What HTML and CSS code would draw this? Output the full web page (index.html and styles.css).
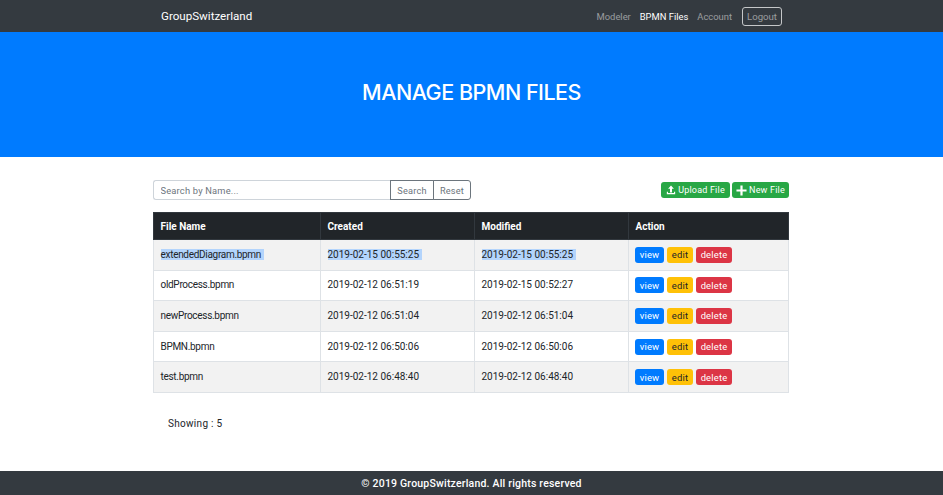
FILE: index.html
```html
<!DOCTYPE html>
<html lang="en">
<head>
  <meta charset="UTF-8" />
  <title>Manage BPMN Files</title>
  <link rel="stylesheet" href="styles.css">
</head>
<body>
  <nav class="navbar">
    <a class="brand" href="#">GroupSwitzerland</a>
    <div class="nav-links">
      <a href="#">Modeler</a>
      <a class="active" href="#">BPMN Files</a>
      <a href="#">Account</a>
      <button class="btn-logout">Logout</button>
    </div>
  </nav>

  <header class="hero">
    <h1>MANAGE BPMN FILES</h1>
  </header>

  <main class="content">
    <div class="toolbar">
      <div class="search">
        <input type="text" placeholder="Search by Name..." />
        <button class="btn-outline">Search</button>
        <button class="btn-outline">Reset</button>
      </div>
      <div class="file-actions">
        <button class="btn btn-green btn-upload">
          <svg viewBox="0 0 12 12" width="10" height="10"><path d="M6 .5 9.5 4.5H7.2V9H4.8V4.5H2.5zM1 8h1.4v1.6h7.2V8H11v3H1z" fill="#fff"/></svg>
          Upload File
        </button>
        <button class="btn btn-green btn-new">
          <svg viewBox="0 0 12 12" width="11" height="11"><path d="M4.8 .5h2.4v4.3h4.3v2.4H7.2v4.3H4.8V7.2H.5V4.8h4.3z" fill="#fff"/></svg>
          New File
        </button>
      </div>
    </div>

    <table class="files">
      <thead>
        <tr><th>File Name</th><th>Created</th><th>Modified</th><th>Action</th></tr>
      </thead>
      <tbody>
        <tr>
          <td class="name"><span class="selected">extendedDiagram.bpmn</span></td>
          <td><span class="selected">2019-02-15 00:55:25</span></td>
          <td><span class="selected">2019-02-15 00:55:25</span></td>
          <td class="actions"><button class="btn btn-blue">view</button><button class="btn btn-yellow">edit</button><button class="btn btn-red">delete</button></td>
        </tr>
        <tr>
          <td class="name">oldProcess.bpmn</td>
          <td>2019-02-12 06:51:19</td>
          <td>2019-02-15 00:52:27</td>
          <td class="actions"><button class="btn btn-blue">view</button><button class="btn btn-yellow">edit</button><button class="btn btn-red">delete</button></td>
        </tr>
        <tr>
          <td class="name">newProcess.bpmn</td>
          <td>2019-02-12 06:51:04</td>
          <td>2019-02-12 06:51:04</td>
          <td class="actions"><button class="btn btn-blue">view</button><button class="btn btn-yellow">edit</button><button class="btn btn-red">delete</button></td>
        </tr>
        <tr>
          <td class="name">BPMN.bpmn</td>
          <td>2019-02-12 06:50:06</td>
          <td>2019-02-12 06:50:06</td>
          <td class="actions"><button class="btn btn-blue">view</button><button class="btn btn-yellow">edit</button><button class="btn btn-red">delete</button></td>
        </tr>
        <tr>
          <td class="name">test.bpmn</td>
          <td>2019-02-12 06:48:40</td>
          <td>2019-02-12 06:48:40</td>
          <td class="actions"><button class="btn btn-blue">view</button><button class="btn btn-yellow">edit</button><button class="btn btn-red">delete</button></td>
        </tr>
      </tbody>
    </table>

    <p class="count">Showing : 5</p>
  </main>

  <footer class="footer">© 2019 GroupSwitzerland. All rights reserved</footer>
</body>
</html>
```

FILE: styles.css
```css
* { box-sizing: border-box; }
body { margin: 0; height: 495px; overflow: hidden; display: flex; flex-direction: column; font-family: Roboto, "Liberation Sans", sans-serif; font-size: 10px; color: #212529; background: #fff; }
button { font-family: inherit; cursor: pointer; }

.navbar { height: 32px; flex: none; background: #343a40; display: flex; align-items: center; justify-content: space-between; padding: 0 161px; }
.brand { color: #fff; font-size: 11.6px; text-decoration: none; }
.nav-links { display: flex; align-items: center; gap: 9px; }
.nav-links a { color: rgba(255,255,255,.5); text-decoration: none; font-size: 9.4px; }
.nav-links a.active { color: #fff; }
.btn-logout { margin-left: 1px; width: 40px; height: 19px; padding: 0; background: transparent; color: rgba(255,255,255,.5); border: 1px solid #c5c7c9; border-radius: 3px; font-size: 9.6px; }

.hero { height: 125px; flex: none; background: #007bff; display: flex; align-items: center; justify-content: center; padding-bottom: 6px; }
.hero h1 { margin: 0; font-family: Inter, sans-serif; color: #fff; font-size: 21.5px; font-weight: 500; letter-spacing: -0.5px; }

.content { flex: 1; width: 636px; margin-left: 153px; padding-top: 23px; }
.toolbar { display: flex; justify-content: space-between; align-items: center; height: 20px; }
.search { display: flex; height: 20px; }
.search input { width: 237px; height: 20px; padding: 0 6.5px; border: 1px solid #ced4da; border-right: 0; border-radius: 3px 0 0 3px; font-family: inherit; font-size: 9.3px; letter-spacing: .2px; outline: none; }
.search input::placeholder { color: #6c757d; }
.btn-outline { height: 20px; width: 44px; padding: 0; background: #fff; color: #6c757d; border: 1px solid #6c757d; font-size: 9.2px; letter-spacing: .2px; }
.btn-outline + .btn-outline { width: 38px; margin-left: -1px; border-radius: 0 3px 3px 0; }

.file-actions { display: flex; gap: 2px; }
.btn { height: 16px; padding: 0; border: 0; border-radius: 3px; color: #fff; font-size: 9.4px; letter-spacing: .2px; white-space: nowrap; }
.file-actions .btn { display: flex; align-items: center; justify-content: center; gap: 2px; font-size: 9px; }
.btn-upload { width: 69px; }
.btn-new { width: 57px; }
.btn-green { background: #28a745; }
.btn-blue { background: #007bff; width: 29px; }
.btn-yellow { background: #ffc107; color: #212529; width: 26px; }
.btn-red { background: #dc3545; width: 36px; }

.files { width: 636px; margin-top: 12px; border-collapse: collapse; table-layout: fixed; }
.files th:nth-child(1) { width: 167px; }
.files th:nth-child(2), .files th:nth-child(3) { width: 154px; }
.files th { height: 27px; padding: 0 6.5px; background: #212529; color: #fff; border: 1px solid #32383e; font-size: 10px; font-weight: 700; text-align: left; }
.files td { height: 30.6px; padding: 0 6.5px 1px; border: 1px solid #dee2e6; font-size: 10px; white-space: nowrap; }
.files td.name { letter-spacing: -.3px; }
.files tbody tr:nth-child(odd) { background: #f2f2f2; }
.selected { background: #b3d4fc; padding-right: 3px; }
.files td.actions { font-size: 0; padding: 0 6px; }
.actions .btn { margin-right: 3px; }

.count { margin: 25px 0 0 15px; font-size: 10px; letter-spacing: .3px; }

.footer { height: 24px; flex: none; background: #343a40; color: #fff; display: flex; align-items: center; justify-content: center; font-size: 10.5px; font-weight: 500; letter-spacing: .2px; }
```
